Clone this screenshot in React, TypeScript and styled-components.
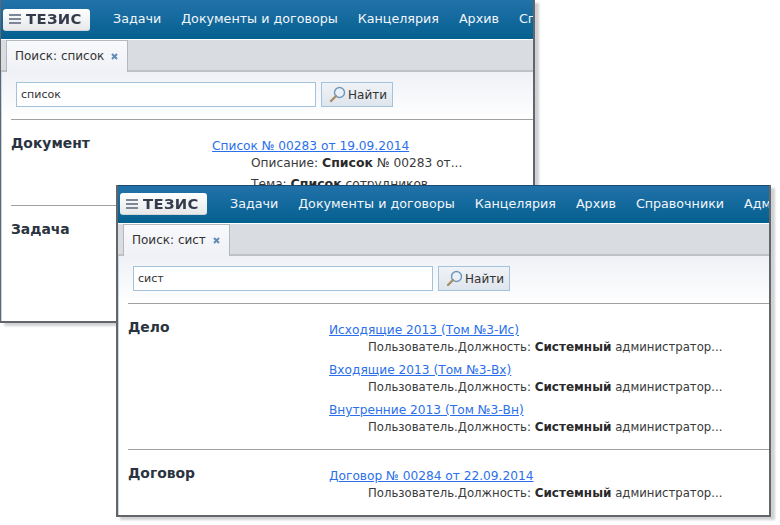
import type { ReactNode } from "react";
import styled, { createGlobalStyle } from "styled-components";

const GlobalStyle = createGlobalStyle`
  html, body {
    margin: 0;
    padding: 0;
    background: #fff;
  }
  body {
    font-family: "DejaVu Sans", Verdana, sans-serif;
    font-size: 12px;
    color: #333;
  }
`;

const Desktop = styled.div`
  position: relative;
  width: 780px;
  height: 525px;
  overflow: hidden;
  background: #fff;
`;

interface IFrame {
  $x: number;
  $y: number;
  $w: number;
  $h: number;
  $z: number;
}

// windows sit on a free canvas, so these two are placed by coordinates
const Window = styled.section<IFrame & { $edge: number }>`
  position: absolute;
  left: ${(p) => p.$x}px;
  top: ${(p) => p.$y}px;
  width: ${(p) => p.$w}px;
  height: ${(p) => p.$h}px;
  z-index: ${(p) => p.$z};
  box-sizing: border-box;
  display: flex;
  flex-direction: column;
  overflow: hidden;
  background: #fff;
  border: 2px solid #62666b;
  border-left-width: ${(p) => p.$edge}px;
  border-top: 0;
`;

const Shadow = styled.div<IFrame>`
  position: absolute;
  left: ${(p) => p.$x + 4}px;
  top: ${(p) => p.$y + 3}px;
  width: ${(p) => p.$w}px;
  height: ${(p) => p.$h}px;
  z-index: ${(p) => p.$z};
  background: #cfd1d4;
  filter: blur(1px);
`;

const Header = styled.header<{ $h: number; $capped?: boolean }>`
  height: ${(p) => p.$h}px;
  flex: none;
  display: flex;
  align-items: center;
  gap: 20px;
  padding-left: 2px;
  border-bottom: 1px solid #fff;
  background: linear-gradient(#2272aa, #04608f);
  box-shadow: ${(p) => (p.$capped ? "inset 0 1px 0 #1b4a70" : "none")};
  white-space: nowrap;
`;

const Logo = styled.div`
  flex: none;
  width: 87px;
  height: 22px;
  margin-right: 3px;
  box-sizing: border-box;
  display: flex;
  align-items: center;
  gap: 4px;
  padding-left: 6px;
  overflow: hidden;
  border-radius: 3px;
  background: linear-gradient(#ffffff, #e6e8ea);
  border-bottom: 1px solid #d3d6d9;
`;

const LogoMark = styled.svg`
  width: 13px;
  height: 10px;
  flex: none;
`;

const LogoWord = styled.span`
  display: inline-block;
  font-weight: 700;
  font-size: 14px;
  line-height: 14px;
  letter-spacing: 0.3px;
  color: #343c4c;
  transform: scaleX(1.06);
  transform-origin: left center;
`;

const NavItem = styled.span`
  color: #f2f6fa;
  font-size: 12.7px;
  padding-bottom: 2px;
`;

const TabBar = styled.div`
  height: 32px;
  flex: none;
  box-sizing: border-box;
  display: flex;
  padding-left: 5px;
  background: #d9dce1;
  border-bottom: 2px solid #bfc1c5;
`;

const Tab = styled.div`
  height: 32px;
  box-sizing: border-box;
  display: flex;
  align-items: center;
  gap: 7px;
  padding: 0 9px 2px 8px;
  background: linear-gradient(#f8f9fb, #eff1f6);
  border: 1px solid #b4b7bb;
  border-bottom: 0;
  font-size: 12px;
  color: #333;
`;

const CloseMark = styled.svg`
  width: 7px;
  height: 7px;
  margin-top: 2px;
`;

const Body = styled.div`
  flex: 1;
  padding: 10px 0 0 9px;
  background: linear-gradient(#eff1f6, #fff 48px);
  border-left: 1px solid #c3d7e6;
`;

const SearchRow = styled.div`
  display: flex;
  gap: 5px;
  padding-left: 5px;
`;

const SearchInput = styled.div`
  width: 300px;
  height: 25px;
  box-sizing: border-box;
  display: flex;
  align-items: center;
  padding-left: 4px;
  background: #fff;
  border: 1px solid #a3c2dc;
  font-size: 11px;
  color: #333;
`;

const SearchButton = styled.div`
  width: 72px;
  height: 25px;
  box-sizing: border-box;
  display: flex;
  align-items: center;
  gap: 2px;
  padding-left: 7px;
  background: linear-gradient(#f0f3f7, #dfe5ed);
  border: 1px solid #a3c2dc;
  font-size: 12px;
  color: #333;
`;

const Lens = styled.svg`
  width: 17px;
  height: 17px;
  flex: none;
`;

const Section = styled.div`
  margin-top: 12px;
  border-top: 1px solid #a0a0a0;
  display: grid;
  grid-template-columns: 201px 1fr;
  padding-top: 15px;
`;

const SectionTitle = styled.h3`
  margin: 0;
  font-size: 13.9px;
  line-height: 16px;
  font-weight: 700;
  color: #2a3340;
`;

const Results = styled.div<{ $gap: number }>`
  display: flex;
  flex-direction: column;
  gap: ${(p) => p.$gap}px;
  padding-top: 3px;
  white-space: nowrap;
`;

const ResultLink = styled.a`
  display: block;
  font-size: 12.2px;
  line-height: 16px;
  color: #2b70ea;
  text-decoration: underline;
`;

const Detail = styled.div<{ $wide?: boolean }>`
  padding-left: 39px;
  font-size: ${(p) => (p.$wide ? 12.2 : 11.7)}px;
  line-height: ${(p) => (p.$wide ? 18 : 19)}px;
  color: #3a3a3a;
  b {
    font-size: ${(p) => (p.$wide ? 12.5 : 12)}px;
    color: #2a2a2a;
  }
`;

const nav = ["Задачи", "Документы и договоры", "Канцелярия", "Архив", "Справочники", "Администрирование"];

function LogoBlock() {
  return (
    <Logo>
      <LogoMark viewBox="0 0 13 10">
        <rect x="0" y="0" width="12" height="2" fill="#7d8896" />
        <rect x="0" y="4" width="12" height="2" fill="#7d8896" />
        <rect x="0" y="8" width="12" height="2" fill="#7d8896" />
      </LogoMark>
      <LogoWord>ТЕЗИС</LogoWord>
    </Logo>
  );
}

function LensIcon() {
  return (
    <Lens viewBox="0 0 17 17">
      <circle cx="10.5" cy="6.5" r="5" fill="#e9f1f8" stroke="#6e97ba" strokeWidth="1.4" />
      <path d="M7 10l-5 5" stroke="#a58f6a" strokeWidth="2.4" strokeLinecap="round" />
    </Lens>
  );
}

interface IChrome {
  query: string;
  height: number;
  capped?: boolean;
  children: ReactNode;
}

function Chrome({ query, height, capped, children }: IChrome) {
  return (
    <>
      <Header $h={height} $capped={capped}>
        <LogoBlock />
        {nav.map((n) => (
          <NavItem key={n}>{n}</NavItem>
        ))}
      </Header>
      <TabBar>
        <Tab>
          Поиск: {query}
          <CloseMark viewBox="0 0 7 7">
            <path d="M1 1l5 5M6 1l-5 5" stroke="#5f8bb5" strokeWidth="2" />
          </CloseMark>
        </Tab>
      </TabBar>
      <Body>
        <SearchRow>
          <SearchInput>{query}</SearchInput>
          <SearchButton>
            <LensIcon />
            Найти
          </SearchButton>
        </SearchRow>
        {children}
      </Body>
    </>
  );
}

function UserResult({ title }: { title: string }) {
  return (
    <div>
      <ResultLink>{title}</ResultLink>
      <Detail>
        Пользователь.Должность: <b>Системный</b> администратор...
      </Detail>
    </div>
  );
}

export default function App() {
  return (
    <Desktop>
      <GlobalStyle />
      <Shadow $x={0} $y={0} $w={535} $h={323} $z={1} />
      <Window $x={0} $y={0} $w={535} $h={323} $z={2} $edge={1}>
        <Chrome query="список" height={39}>
          <Section>
            <SectionTitle>Документ</SectionTitle>
            <Results $gap={3}>
              <div>
                <ResultLink>Список № 00283 от 19.09.2014</ResultLink>
                <Detail $wide>
                  Описание: <b>Список</b> № 00283 от...
                </Detail>
              </div>
              <Detail $wide>
                Тема: <b>Список</b> сотрудников
              </Detail>
            </Results>
          </Section>
          <Section>
            <SectionTitle>Задача</SectionTitle>
          </Section>
        </Chrome>
      </Window>

      <Shadow $x={116} $y={185} $w={655} $h={332} $z={3} />
      <Window $x={116} $y={185} $w={655} $h={332} $z={4} $edge={2}>
        <Chrome query="сист" height={38} capped>
          <Section>
            <SectionTitle>Дело</SectionTitle>
            <Results $gap={5}>
              <UserResult title="Исходящие 2013 (Том №3-Ис)" />
              <UserResult title="Входящие 2013 (Том №3-Вх)" />
              <UserResult title="Внутренние 2013 (Том №3-Вн)" />
            </Results>
          </Section>
          <Section>
            <SectionTitle>Договор</SectionTitle>
            <Results $gap={5}>
              <UserResult title="Договор № 00284 от 22.09.2014" />
            </Results>
          </Section>
        </Chrome>
      </Window>
    </Desktop>
  );
}
